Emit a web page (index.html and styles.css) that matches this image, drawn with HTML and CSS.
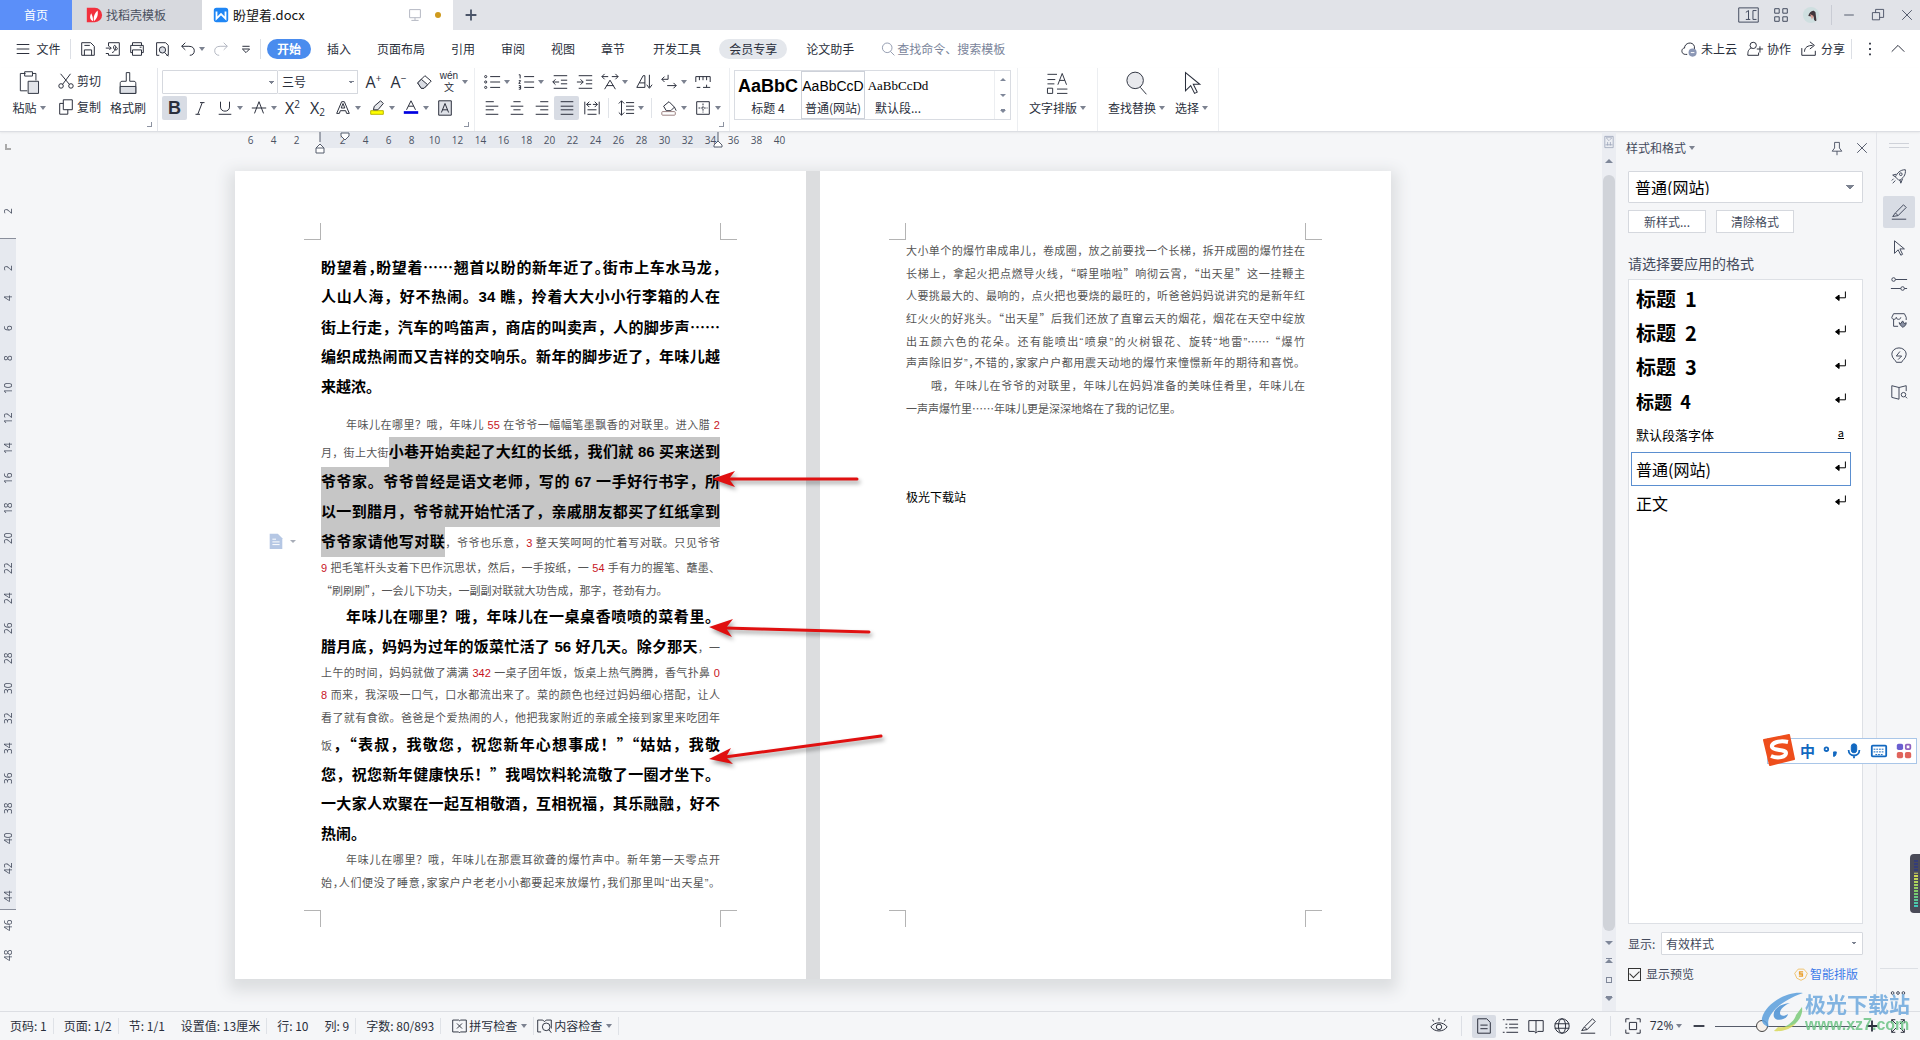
FILE: index.html
```html
<!DOCTYPE html>
<html lang="zh-CN">
<head>
<meta charset="utf-8">
<title>盼望着.docx</title>
<link rel="stylesheet" href="styles.css">
</head>
<body>
<svg class="sprite" aria-hidden="true">
<symbol id="save" viewBox="0 0 20 20"><path d="M3 17V3h10l4 4v10zM6 17v-6h8v6M6 6h6"/></symbol>
<symbol id="export" viewBox="0 0 20 20"><path d="M5 7V3h12v14H5v-2M2 9h6l-2-2M8 9l-2 2M9 14c4-1 5-8 3-8s-2 5 1 5 2-3 0-3M2 15h3"/></symbol>
<symbol id="print" viewBox="0 0 20 20"><path d="M5 6V3h10v3M5 14H3V6h14v8h-2M5 11h10v6H5zM13 8h2"/></symbol>
<symbol id="preview" viewBox="0 0 20 20"><path d="M7 17H4V3h10l3 3v11h-2"/><circle cx="10.500" cy="11" r="3.500" fill="#d9dce3"/><path d="M13 14l4 4"/></symbol>
<symbol id="undo" viewBox="0 0 20 20"><path d="M7 3L3 7l4 4M3 7h8c4 0 6 2 6 5s-2 5-5 5"/></symbol>
<symbol id="redo" viewBox="0 0 20 20"><path d="M13 3l4 4-4 4M17 7H9c-4 0-6 2-6 5s2 5 5 5"/></symbol>
<symbol id="more" viewBox="0 0 20 20"><path d="M6 7h8M6 10l4 4 4-4z"/></symbol>
<symbol id="search" viewBox="0 0 20 20"><circle cx="9" cy="8.500" r="6"/><path d="M13 13l5 5"/></symbol>
<symbol id="cloud" viewBox="0 0 20 20"><path d="M8 16H6c-5 0-5-7-1-7 0-6 9-8 11-2v3"/><circle cx="14" cy="14" r="4.500" fill="#8b97b5" stroke="none"/><path d="M12 14h4" stroke="#fff"/></symbol>
<symbol id="collab" viewBox="0 0 20 20"><circle cx="8" cy="6" r="3.500"/><path d="M6 9c-3 1-4 3-4 8h12v-3M12 10h7M15.500 7v7"/></symbol>
<symbol id="share" viewBox="0 0 20 20"><path d="M2 9v8h15v-5M5 13c0-5 4-7 9-7M11 2l5 4-5 4"/></symbol>
<symbol id="paste" viewBox="0 0 24 30"><path d="M8 4H2v20h8M16 4h4v8M7 2h9v5H7z"/><path d="M11 13h12v14H11z" fill="#e3e5ea"/></symbol>
<symbol id="cut" viewBox="0 0 20 20"><path d="M4 2l10 12M15 2L6 14"/><circle cx="4.500" cy="15.500" r="2.500"/><circle cx="15.500" cy="15.500" r="2.500"/></symbol>
<symbol id="copy" viewBox="0 0 20 20"><path d="M7 2h10v11H7zM7 6H3v12h9v-5"/></symbol>
<symbol id="brush" viewBox="0 0 24 30"><path d="M10 3h4v10h5c2 0 2 2 2 3v11H3V16c0-1 0-3 2-3h5z"/><path d="M3 19h18v8H3z" fill="#dcdfe5"/></symbol>
<symbol id="eraser" viewBox="0 0 20 20"><path d="M3 11l8-8 7 6-8 8H7z"/><path d="M3 11l4-4 7 6-4 4H7z" fill="#d9dce3"/></symbol>
<symbol id="ital" viewBox="0 0 20 20"><path d="M10 4h5M5 17h5M12.500 4l-5 13"/></symbol>
<symbol id="under" viewBox="0 0 20 20"><path d="M5 3v6c0 6 10 6 10 0V3M3 17h14"/></symbol>
<symbol id="strike" viewBox="0 0 20 20"><path d="M5 16l5-13 5 13M2 10h16"/></symbol>
<symbol id="effect" viewBox="0 0 20 20"><path d="M3 16L8.500 3h3L17 16h-3l-1-3H7l-1 3zM8 10h4l-2-5z"/></symbol>
<symbol id="hilite" viewBox="0 0 20 20"><path d="M3 13h14v4H3z" fill="#ff0" stroke="#b9b400"/><path d="M6 12l1-4 7-6 3 3-6 7z" fill="#e4e6ea"/></symbol>
<symbol id="fcolor" viewBox="0 0 20 20"><path d="M5 12l5-10 5 10M7 8h6"/><path d="M2 15h16" stroke="#0000e0" stroke-width="3"/></symbol>
<symbol id="abox" viewBox="0 0 20 20"><path d="M3 2h14v16H3z" fill="#dfe2e8"/><path d="M6 15l4-10 4 10M7 12h6"/></symbol>
<symbol id="bullets" viewBox="0 0 20 20"><path d="M8 4h11M8 10h11M8 16h11"/><circle cx="3" cy="4" r="1.200"/><circle cx="3" cy="10" r="1.200"/><circle cx="3" cy="16" r="1.200"/></symbol>
<symbol id="numbers" viewBox="0 0 20 20"><path d="M8 4h11M8 10h11M8 16h11M2 2h1.500v4M2 8.500h2L2 11.500h2M2 14h2v4H2M2 16h2"/></symbol>
<symbol id="outdent" viewBox="0 0 20 20"><path d="M3 3h15M11 8h7M11 12h7M3 17h15M9 10H2M5 7l-3 3 3 3"/></symbol>
<symbol id="indent" viewBox="0 0 20 20"><path d="M3 3h15M11 8h7M11 12h7M3 17h15M1 10h7M5 7l3 3-3 3"/></symbol>
<symbol id="cspace" viewBox="0 0 20 20"><path d="M4 18l6-10 6 10M6 14h8M1 4h7M12 4h7M4 1L1 4l3 3M16 1l3 3-3 3"/></symbol>
<symbol id="sort" viewBox="0 0 20 20"><path d="M2 16L9 3h2v13zM5 11h6M16 2v14M13 13l3 4 3-4"/></symbol>
<symbol id="wrap" viewBox="0 0 20 20"><path d="M9 2v5H2M5 4L2 7l3 3M8 14h10M15 11l3 3-3 3"/></symbol>
<symbol id="tabs" viewBox="0 0 20 20"><path d="M2 10V4h16v6M6 4v4M10 4v4M14 4v4M3 16h4M10 16h8M14 13v3"/></symbol>
<symbol id="aleft" viewBox="0 0 20 20"><path d="M3 3h9M3 8h14M3 12h9M3 17h14"/></symbol>
<symbol id="acenter" viewBox="0 0 20 20"><path d="M6 3h8M3 8h14M6 12h8M3 17h14"/></symbol>
<symbol id="aright" viewBox="0 0 20 20"><path d="M8 3h9M3 8h14M8 12h9M3 17h14"/></symbol>
<symbol id="ajust" viewBox="0 0 20 20"><path d="M3 3h14M3 8h14M3 12h14M3 17h14"/></symbol>
<symbol id="adist" viewBox="0 0 20 20"><path d="M2 3v14M18 3v14M5 12h10M5 17h10M4 6h5M11 6h5M7 3L4 6l3 3M13 3l3 3-3 3"/></symbol>
<symbol id="lspace" viewBox="0 0 20 20"><path d="M10 4h9M10 8h9M10 12h9M10 16h9M5 2v16M2 5l3-3 3 3M2 15l3 3 3-3"/></symbol>
<symbol id="fill" viewBox="0 0 20 20"><path d="M4 8l6-5 6 6-4 4H7zM16 9l2 4"/><rect x="2" y="14" width="15" height="4" rx="1" stroke="#9a7f7f"/></symbol>
<symbol id="borders" viewBox="0 0 20 20"><path d="M3 3h14v14H3z"/><path d="M10 5v10M5 10h10" stroke-dasharray="2 1"/></symbol>
<symbol id="typeset" viewBox="0 0 26 30"><path d="M2 5h11M2 11h9M2 16h8M14 17l5-13 5 13M16 12h6M2 21h6v6H2zM13 22h12M13 27h12"/></symbol>
<symbol id="find" viewBox="0 0 26 30"><circle cx="12" cy="12" r="9.500" fill="#e8e9ed"/><path d="M18 20l7 8"/></symbol>
<symbol id="cursor" viewBox="0 0 20 20"><path d="M5 2v14l4-4 3 6 2-1-3-6h5z"/></symbol>
<symbol id="screen" viewBox="0 0 24 18"><path d="M1 1h22v16H1zM21 4h-4v10h4M9 6l3-2v10M9 14h5"/></symbol>
<symbol id="grid" viewBox="0 0 20 20"><path d="M3 3h5v5H3zM12 3h5v5h-5zM3 12h5v5H3zM12 12h5v5h-5z"/></symbol>
<symbol id="min" viewBox="0 0 20 20"><path d="M4 10h12"/></symbol>
<symbol id="restore" viewBox="0 0 20 20"><path d="M3 7h9v9H3zM7 7V3h10v10h-5"/></symbol>
<symbol id="close" viewBox="0 0 20 20"><path d="M4 4l12 12M16 4L4 16"/></symbol>
<symbol id="up" viewBox="0 0 20 20"><path d="M3 13l7-7 7 7"/></symbol>
<symbol id="pin" viewBox="0 0 20 20"><path d="M7 3h6v7l3 4H4l3-4zM10 14v5"/></symbol>
<symbol id="rocket" viewBox="0 0 20 20"><path d="M17 3c-6 0-9 4-11 8l4 4c4-2 8-6 7-12zM7 8L3 9l3 2M11 14l1 4 2-5M4 13l-2 2M6 15l-3 3"/><circle cx="12" cy="8" r="1.500"/></symbol>
<symbol id="pen" viewBox="0 0 20 20"><path d="M6 11l9-9 3 3-9 9zM6 11l-3 4 6-1M2 18h16"/></symbol>
<symbol id="sliders" viewBox="0 0 20 20"><circle cx="4" cy="5" r="2"/><circle cx="14" cy="15" r="2"/><path d="M6 5h13M1 15h11M16 15h3"/></symbol>
<symbol id="store" viewBox="0 0 20 20"><path d="M4 9v8h5M2 7l2-4h12l2 4M2 7c0 3 5 3 5 0 0 3 5 3 5 0M18 7v3"/><path d="M10 13c2 4 4 5 4 5s4-1 4-5l-2 1-2-3-2 3z" fill="#8a91a3"/></symbol>
<symbol id="bulb" viewBox="0 0 20 20"><path d="M7 17c0-2-5-4-5-9a8 7 0 0116 0c0 5-5 7-5 9zM11 5l-4 5h6l-4 4"/></symbol>
<symbol id="book" viewBox="0 0 20 20"><path d="M10 5L2 3v13l8 2V5l8-2v6"/><circle cx="15" cy="13" r="2.500"/><path d="M17 15l2 2"/></symbol>
<symbol id="bookopen" viewBox="0 0 20 20"><path d="M10 4H2v12h6l2 2 2-2h6V4zM10 4v13"/></symbol>
<symbol id="ret" viewBox="0 0 20 20"><path d="M16 5v7H6"/><path d="M9 9l-4 3 4 3z" fill="currentColor"/></symbol>
<symbol id="spell" viewBox="0 0 20 20"><path d="M9 3H2v14h7l1 1 1-1h7V3h-7l-1 1zM7 7l6 6M13 7l-6 6"/></symbol>
<symbol id="check" viewBox="0 0 20 20"><path d="M6 17H2V3h6l2 2 2-2h6v10"/><circle cx="12" cy="11" r="4.500"/><path d="M15 14l3 4"/></symbol>
<symbol id="eye" viewBox="0 0 20 20"><path d="M1 11c4-6 14-6 18 0-4 6-14 6-18 0zM10 4V1M4 5L3 3M16 5l1-2"/><circle cx="10" cy="11" r="3"/></symbol>
<symbol id="pageview" viewBox="0 0 20 20"><path d="M3 2h10l4 4v12H3zM6 9h8M6 13h8"/></symbol>
<symbol id="outline" viewBox="0 0 20 20"><path d="M6 3h13M9 8h10M9 12h10M6 17h13M2 3h2M5 8h2M5 12h2M2 17h2"/></symbol>
<symbol id="globe" viewBox="0 0 20 20"><circle cx="10" cy="10" r="8"/><ellipse cx="10" cy="10" rx="4" ry="8"/><path d="M2 7.500h16M2 12.500h16"/></symbol>
<symbol id="fit" viewBox="0 0 20 20"><path d="M2 6V2h4M14 2h4v4M18 14v4h-4M6 18H2v-4M6 6h8v8H6z"/></symbol>
<symbol id="full" viewBox="0 0 20 20"><path d="M3 7V3h4M3 3l5 5M13 3h4v4M17 3l-5 5M17 13v4h-4M17 17l-5-5M7 17H3v-4M3 17l5-5"/></symbol>
</svg>

<header class="titlebar">
  <button class="tab home">首页</button>
  <button class="tab docer"><svg class="ic fire" viewBox="0 0 20 20"><path d="M2 2h9a8 8 0 010 16H2z" fill="#f2303d" stroke="none"/><path d="M9 17c-4-2-4-6-2-9 1 3 2 4 2 9zM10 17c-1-6 1-9 4-12 1 6-1 9-4 12z" fill="#fff" stroke="none"/></svg>找稻壳模板</button>
  <button class="tab doc"><svg class="ic" viewBox="0 0 20 20"><rect x="2" y="2" width="16" height="16" rx="3" fill="#1f86f5" stroke="none"/><path d="M5 6v8l5-5 5 5V6" stroke="#fff" stroke-width="2"/></svg><span class="grow">盼望着.docx</span><svg class="ic pale" viewBox="0 0 20 20"><path d="M4 4h12v9H4zM10 13v3M6 16h8"/></svg><i class="dot"></i></button>
  <button class="plus" aria-label="新建"><svg class="ic" viewBox="0 0 20 20"><path d="M4 10h12M10 4v12" stroke-width="2"/></svg></button>
  <div class="winctl">
    <svg class="ic wide"><use href="#screen"/></svg><svg class="ic"><use href="#grid"/></svg>
    <svg class="ic" viewBox="0 0 20 20"><circle cx="10" cy="10" r="9" fill="#cfdfe0" stroke="none"/><path d="M7 11c1-5 6-8 8-4l1 9c-2 2-3-1-3-4z" fill="#41363c" stroke="none"/><path d="M9 9l4 2-2 4z" fill="#d99d92" stroke="none"/></svg>
    <i class="vsep"></i>
    <button aria-label="最小化"><svg class="ic"><use href="#min"/></svg></button><button aria-label="还原"><svg class="ic"><use href="#restore"/></svg></button><button aria-label="关闭"><svg class="ic"><use href="#close"/></svg></button>
  </div>
</header>

<nav class="menubar">
  <button class="file"><svg class="ic" viewBox="0 0 20 20"><path d="M3 5h14M3 10h14M3 15h14"/></svg>文件</button>
  <i class="vsep"></i>
  <div class="quick">
    <button aria-label="保存"><svg class="ic"><use href="#save"/></svg></button><button aria-label="输出"><svg class="ic"><use href="#export"/></svg></button><button aria-label="打印"><svg class="ic"><use href="#print"/></svg></button><button aria-label="预览"><svg class="ic"><use href="#preview"/></svg></button><button class="dd" aria-label="撤销"><svg class="ic"><use href="#undo"/></svg></button><button class="pale" aria-label="恢复"><svg class="ic"><use href="#redo"/></svg></button><button aria-label="更多"><svg class="ic"><use href="#more"/></svg></button>
  </div>
  <i class="vsep"></i>
  <div class="menus">
    <button class="pill on">开始</button><button>插入</button><button>页面布局</button><button>引用</button><button>审阅</button><button>视图</button><button>章节</button><button class="dev">开发工具</button><button class="pill vip">会员专享</button><button>论文助手</button>
  </div>
  <label class="search"><svg class="ic"><use href="#search"/></svg><input type="text" placeholder="查找命令、搜索模板" aria-label="查找命令"></label>
  <div class="account">
    <button><svg class="ic"><use href="#cloud"/></svg>未上云</button><button><svg class="ic"><use href="#collab"/></svg>协作</button><button><svg class="ic"><use href="#share"/></svg>分享</button>
    <i class="vsep"></i>
    <button aria-label="菜单"><svg class="ic" viewBox="0 0 20 20"><path d="M10 3v2M10 9v2M10 15v2" stroke-width="2"/></svg></button><button aria-label="收起"><svg class="ic"><use href="#up"/></svg></button>
  </div>
</nav>

<section class="ribbon">
  <div class="group clip">
    <button class="big"><svg class="ic lg"><use href="#paste"/></svg><span class="dd">粘贴</span></button>
    <div class="stack"><button><svg class="ic"><use href="#cut"/></svg>剪切</button><button><svg class="ic"><use href="#copy"/></svg>复制</button></div>
    <button class="big"><svg class="ic lg"><use href="#brush"/></svg><span>格式刷</span></button>
    <i class="launch"></i>
  </div>
  <div class="group font">
    <div class="row">
      <select class="combo name" aria-label="字体"><option></option></select><select class="combo size" aria-label="字号"><option>三号</option></select>
      <button class="t" aria-label="增大字号"><span class="glyph">A<sup>+</sup></span></button><button class="t" aria-label="减小字号"><span class="glyph">A<sup>−</sup></span></button><button class="t" aria-label="清除"><svg class="ic"><use href="#eraser"/></svg></button><button class="t dd wen"><span><span>wén</span><span>文</span></span></button>
    </div>
    <div class="row">
      <button class="t on bold">B</button><button class="t" aria-label="倾斜"><svg class="ic"><use href="#ital"/></svg></button><button class="t dd" aria-label="下划线"><svg class="ic"><use href="#under"/></svg></button><button class="t dd" aria-label="删除线"><svg class="ic"><use href="#strike"/></svg></button><button class="t"><span class="glyph">X<sup>2</sup></span></button><button class="t"><span class="glyph">X<sub>2</sub></span></button><button class="t dd" aria-label="效果"><svg class="ic"><use href="#effect"/></svg></button><button class="t dd" aria-label="突出显示"><svg class="ic"><use href="#hilite"/></svg></button><button class="t dd" aria-label="字体颜色"><svg class="ic"><use href="#fcolor"/></svg></button><button class="t" aria-label="底纹"><svg class="ic"><use href="#abox"/></svg></button>
    </div>
    <i class="launch"></i>
  </div>
  <div class="group para">
    <div class="row">
      <button class="t dd" aria-label="项目符号"><svg class="ic"><use href="#bullets"/></svg></button><button class="t dd" aria-label="编号"><svg class="ic"><use href="#numbers"/></svg></button><button class="t" aria-label="减少缩进"><svg class="ic"><use href="#outdent"/></svg></button><button class="t" aria-label="增加缩进"><svg class="ic"><use href="#indent"/></svg></button><button class="t dd" aria-label="中文版式"><svg class="ic"><use href="#cspace"/></svg></button><button class="t" aria-label="排序"><svg class="ic"><use href="#sort"/></svg></button><button class="t dd" aria-label="换行"><svg class="ic"><use href="#wrap"/></svg></button><button class="t" aria-label="制表位"><svg class="ic"><use href="#tabs"/></svg></button>
    </div>
    <div class="row">
      <button class="t" aria-label="左对齐"><svg class="ic"><use href="#aleft"/></svg></button><button class="t" aria-label="居中"><svg class="ic"><use href="#acenter"/></svg></button><button class="t" aria-label="右对齐"><svg class="ic"><use href="#aright"/></svg></button><button class="t on" aria-label="两端对齐"><svg class="ic"><use href="#ajust"/></svg></button><button class="t" aria-label="分散对齐"><svg class="ic"><use href="#adist"/></svg></button><i class="vsep"></i><button class="t dd" aria-label="行距"><svg class="ic"><use href="#lspace"/></svg></button><i class="vsep"></i><button class="t dd" aria-label="填充"><svg class="ic"><use href="#fill"/></svg></button><button class="t dd" aria-label="边框"><svg class="ic"><use href="#borders"/></svg></button>
    </div>
    <i class="launch"></i>
  </div>
  <div class="group styles">
    <div class="gallery">
      <button class="g1"><b>AaBbC</b><span>标题 4</span></button><button class="g2"><b>AaBbCcD</b><span>普通(网站)</span></button><button class="g3"><b>AaBbCcDd</b><span>默认段...</span></button>
      <div class="gscroll"><button class="tri upw" aria-label="上"></button><button class="tri" aria-label="下"></button><button class="tri bar" aria-label="展开"></button></div>
    </div>
  </div>
  <div class="group g79"><button class="big"><svg class="ic lg"><use href="#typeset"/></svg><span class="dd">文字排版</span></button></div>
  <div class="group g121"><button class="big"><svg class="ic lg"><use href="#find"/></svg><span class="dd">查找替换</span></button><button class="big"><svg class="ic lg thin"><use href="#cursor"/></svg><span class="dd">选择</span></button></div>
</section>

<main class="work">
  <div class="vruler"><i class="tabmark"></i><span>2</span><span class="zero"></span><div class="vactive"><span>2</span><span>4</span><span>6</span><span>8</span><span>10</span><span>12</span><span>14</span><span>16</span><span>18</span><span>20</span><span>22</span><span>24</span><span>26</span><span>28</span><span>30</span><span>32</span><span>34</span><span>36</span><span>38</span><span>40</span><span>42</span><span>44</span></div><span>46</span><span>48</span></div>
  <div class="canvas">
    <div class="hruler">
      <svg class="marks" viewBox="0 0 500 24"><path d="M85 0v10M483 0v10"/><path d="M81 21v-5l4-4 4 4v5zM81 16h8M106 1h8v3l-4 4-4-4zM479 15v-2l4-4 4 4v2z" fill="#fff"/></svg>
      <span>6</span><span>4</span><span>2</span><span></span><span>2</span><span>4</span><span>6</span><span>8</span><span>10</span><span>12</span><span>14</span><span>16</span><span>18</span><span>20</span><span>22</span><span>24</span><span>26</span><span>28</span><span>30</span><span>32</span><span>34</span><span>36</span><span>38</span><span>40</span>
    </div>
    <div class="pages">
      <article class="paper">
        <div class="text">
          <i class="c tl"></i><i class="c tr"></i><i class="c bl"></i><i class="c br"></i>
          <div class="body first">
<p class="h">盼望着<span class="halt">，</span>盼望着<span class="cj">……</span>翘首以盼的新年近了<span class="halt">。</span>街市上车水马龙<span class="halt">，</span></p>
<p class="h">人山人海，好不热闹。34 瞧，拎着大大小小行李箱的人在</p>
<p class="h">街上行走，汽车的鸣笛声，商店的叫卖声，人的脚步声<span class="cj">……</span></p>
<p class="h">编织成热闹而又吉祥的交响乐。新年的脚步近了，年味儿越</p>
<p class="h end last">来越浓。</p>
<p class="in">年味儿在哪里？哦，年味儿 <em>55</em> 在爷爷一幅幅笔墨飘香的对联里。进入腊 <em>2</em></p>
<p class="h"><small>月，街上大街</small><mark>小巷开始卖起了大红的长纸，我们就 86 买来送到</mark></p>
<p class="h sel">爷爷家。爷爷曾经是语文老师，写的 67 一手好行书字，所</p>
<p class="h sel">以一到腊月，爷爷就开始忙活了，亲戚朋友都买了红纸拿到</p>
<p class="h"><mark>爷爷家请他写对联</mark><small>，爷爷也乐意，<em>3</em> 整天笑呵呵的忙着写对联。只见爷爷</small></p>
<p><em>9</em> 把毛笔杆头支着下巴作沉思状，然后，一手按纸，一 <em>54</em> 手有力的握笔、蘸墨、</p>
<p class="end"><span class="cj">“刷刷刷”</span>，一会儿下功夫，一副副对联就大功告成，那字，苍劲有力。</p>
<p class="h in">年味儿在哪里？哦，年味儿在一桌桌香喷喷的菜肴里。</p>
<p class="h">腊月底，妈妈为过年的饭菜忙活了 56 好几天。除夕那天<small>，一</small></p>
<p>上午的时间，妈妈就做了满满 <em>342</em> 一桌子团年饭，饭桌上热气腾腾，香气扑鼻 <em>0</em></p>
<p><em>8</em> 而来，我深吸一口气，口水都流出来了。菜的颜色也经过妈妈细心搭配，让人</p>
<p>看了就有食欲。爸爸是个爱热闹的人，他把我家附近的亲戚全接到家里来吃团年</p>
<p class="h"><small>饭</small><span class="cj">，“表叔，我敬您，祝您新年心想事成！”“姑姑，我敬</span></p>
<p class="h">您，祝您新年健康快乐！<span class="cj">”</span>我喝饮料轮流敬了一圈才坐下。</p>
<p class="h">一大家人欢聚在一起互相敬酒，互相祝福，其乐融融，好不</p>
<p class="h end">热闹。</p>
<p class="in">年味儿在哪里？哦，年味儿在那震耳欲聋的爆竹声中。新年第一天零点开</p>
<p>始<span class="halt">，</span>人们便没了睡意<span class="halt">，</span>家家户户老老小小都要起来放爆竹<span class="halt">，</span>我们那里叫“出天星”。</p>
          </div>
        </div>
        <div class="pasteopt"><svg class="ic" viewBox="0 0 20 20"><path d="M3 2h9l5 5v12H3z" fill="#b5c7e4" stroke="none"/><path d="M6 8h4M6 11h8M6 14h8" stroke="#fff"/></svg><i class="tri"></i></div>
      </article>
      <article class="paper">
        <div class="text">
          <i class="c tl"></i><i class="c tr"></i><i class="c bl"></i><i class="c br"></i>
          <div class="body">
<p>大小单个的爆竹串成串儿，卷成圈，放之前要找一个长梯，拆开成圈的爆竹挂在</p>
<p class="cj">长梯上，拿起火把点燃导火线，“噼里啪啦”响彻云霄，“出天星”这一挂鞭主</p>
<p>人要挑最大的、最响的，点火把也要烧的最旺的，听爸爸妈妈说讲究的是新年红</p>
<p class="cj">红火火的好兆头。“出天星”后我们还放了直窜云天的烟花，烟花在天空中绽放</p>
<p>出五颜六色的花朵。还有能喷出“喷泉”的火树银花、旋转“地雷”<span class="cj">……“</span>爆竹</p>
<p>声声除旧岁”<span class="halt">，</span>不错的<span class="halt">，</span>家家户户都用震天动地的爆竹来憧憬新年的期待和喜悦。</p>
<p class="in">哦，年味儿在爷爷的对联里，年味儿在妈妈准备的美味佳肴里，年味儿在</p>
<p class="end">一声声爆竹里<span class="cj">……</span>年味儿更是深深地烙在了我的记忆里。</p>
<p></p><p></p><p></p>
<p class="end sign">极光下载站</p>
          </div>
        </div>
      </article>
      <svg class="arrows" viewBox="0 0 1156 808"><g><path d="M622 308H494" class="ln"/><path d="M477 308l23-8-6 8 6 8z"/><path d="M634 461L490 457" class="ln"/><path d="M474 456l24-8-7 9 6 9z"/><path d="M646 565L490 586" class="ln"/><path d="M474 588l22-11-5 9 7 7z"/></g></svg>
    </div>
  </div>
  <div class="vscroll"><svg class="ic sm" viewBox="0 0 20 20"><path d="M4 2h12v16H4zM5 14h10M8 10v5M12 10v5" /><path d="M6 4l4 4 4-4z" fill="#fff"/></svg><i class="tri upw"></i><div class="thumb"></div><i class="tri"></i><i class="tri upw bar"></i><i class="sq"></i><i class="tri bar"></i></div>
  <aside class="pane">
    <div class="ptitle"><span class="dd">样式和格式</span><button aria-label="固定"><svg class="ic"><use href="#pin"/></svg></button><button aria-label="关闭窗格"><svg class="ic"><use href="#close"/></svg></button></div>
    <select class="cur" aria-label="当前样式"><option>普通(网站)</option></select>
    <div class="pbtns"><button>新样式...</button><button>清除格式</button></div>
    <h2>请选择要应用的格式</h2>
    <ul class="list">
      <li class="h1">标题 &nbsp;1<svg class="ic"><use href="#ret"/></svg></li><li class="h2">标题 &nbsp;2<svg class="ic"><use href="#ret"/></svg></li><li class="h2">标题 &nbsp;3<svg class="ic"><use href="#ret"/></svg></li><li class="h4">标题 &nbsp;4<svg class="ic"><use href="#ret"/></svg></li><li class="def">默认段落字体<u>a</u></li><li class="cursel">普通(网站)<svg class="ic"><use href="#ret"/></svg></li><li>正文<svg class="ic"><use href="#ret"/></svg></li>
    </ul>
    <div class="show"><label for="show">显示:</label><select id="show"><option>有效样式</option></select></div>
    <div class="prev"><label><input type="checkbox" checked>显示预览</label><a href="#"><svg class="ic sm" viewBox="0 0 20 20"><path d="M6 3h8l5 6-3 7-6 3-6-3-3-7z" stroke="#f0b64c"/><path d="M13 7H8v3h4v3H7" stroke="#eaa02c" stroke-width="2"/></svg>智能排版</a></div>
  </aside>
  <div class="side">
    <i class="grip"></i>
    <button aria-label="快捷"><svg class="ic"><use href="#rocket"/></svg></button><button class="on" aria-label="样式"><svg class="ic"><use href="#pen"/></svg></button><button aria-label="选择"><svg class="ic"><use href="#cursor"/></svg></button><button aria-label="属性"><svg class="ic"><use href="#sliders"/></svg></button><button aria-label="素材"><svg class="ic"><use href="#store"/></svg></button><button aria-label="推荐"><svg class="ic"><use href="#bulb"/></svg></button><button aria-label="词典"><svg class="ic"><use href="#book"/></svg></button>
    <div class="sdots"><svg class="ic" viewBox="0 0 20 20"><circle cx="4" cy="10" r="1.500"/><circle cx="10" cy="10" r="1.500"/><circle cx="16" cy="10" r="1.500"/></svg></div>
  </div>
</main>

<footer class="status">
  <span class="b">页码: 1</span><span class="b">页面: 1/2</span><span>节: 1/1</span><span class="b">设置值: 13厘米</span><span>行: 10</span><span class="b">列: 9</span><span class="b">字数: 80/893</span>
  <button class="b dd"><svg class="ic"><use href="#spell"/></svg>拼写检查</button><button class="b dd"><svg class="ic"><use href="#check"/></svg>内容检查</button>
  <div class="views">
    <button aria-label="护眼"><svg class="ic"><use href="#eye"/></svg></button><i class="vsep"></i>
    <button class="on" aria-label="页面"><svg class="ic"><use href="#pageview"/></svg></button><button aria-label="大纲"><svg class="ic"><use href="#outline"/></svg></button><button aria-label="阅读"><svg class="ic"><use href="#bookopen"/></svg></button><button aria-label="Web"><svg class="ic"><use href="#globe"/></svg></button><button aria-label="写作"><svg class="ic"><use href="#pen"/></svg></button><i class="vsep"></i>
    <button aria-label="适合"><svg class="ic"><use href="#fit"/></svg></button><button class="pct dd">72%</button><button aria-label="缩小"><svg class="ic bolder"><use href="#min"/></svg></button><input type="range" min="0" max="100" value="32" aria-label="缩放"><button aria-label="放大"><svg class="ic bolder" viewBox="0 0 20 20"><path d="M4 10h12M10 4v12"/></svg></button><button aria-label="全屏"><svg class="ic"><use href="#full"/></svg></button>
  </div>
</footer>

<div class="ime">
  <svg class="sogou" viewBox="0 0 32 32"><path d="M1 6L26 1l5 24-24 6z" fill="#ee4e1c" stroke="#ee4e1c" stroke-width="2" stroke-linejoin="round"/><path d="M25 8C16 6 8 9 9 13s14 2 14 6-8 6-15 3" fill="none" stroke="#fff" stroke-width="4"/></svg>
  <b>中</b>
  <svg class="ic" viewBox="0 0 20 20"><circle cx="6" cy="8" r="2" stroke-width="2"/><path d="M14 11h3c0 3-1 5-3 5z" fill="currentColor"/></svg>
  <svg class="ic" viewBox="0 0 20 20"><rect x="7" y="2" width="6" height="10" rx="3" fill="currentColor"/><path d="M4 9c0 8 12 8 12 0M10 15v3" stroke-width="2"/></svg>
  <svg class="ic" viewBox="0 0 20 20"><rect x="2" y="4" width="16" height="12" rx="1" stroke-width="2"/><path d="M4 8h12M4 11h12M6 14h8" stroke-dasharray="2 1"/></svg>
  <svg class="ic" viewBox="0 0 20 20"><g stroke="none"><rect x="2" y="2" width="7" height="7" rx="2" fill="#6a5fd0"/><rect x="2" y="11" width="7" height="7" rx="2" fill="#e0645c"/><rect x="11" y="11" width="7" height="7" rx="2" fill="#e0645c"/></g><rect x="12" y="3" width="5" height="5" rx="1" stroke="#8f62c0" stroke-width="2"/></svg>
</div>
<div class="meter"></div>
<div class="wm">
  <svg viewBox="0 0 44 42"><path d="M42 2C24 0 4 14 1 27c-1 5 3 8 7 9-4-9 6-24 34-34z" fill="#5b9fdc"/><path d="M29 12c-12 1-18 8-16 14 2 5 13 3 14-3-4 3-8 2-8-1 0-4 5-8 10-10z" fill="#4a90d4"/><path d="M41 16c2 12-10 24-28 24 10-3 20-8 22-16z" fill="#7ccb7a"/><path d="M13 40c9 1 17-2 22-8-7 4-14 5-18 4z" fill="#d9d95a"/></svg>
  <div><strong>极光下载站</strong><b>www.xz7.com</b></div>
</div>
</body>
</html>
```
FILE: styles.css
```css
* { box-sizing: border-box; }
body { margin: 0; min-height: 100vh; display: flex; flex-direction: column; background: #f5f6f8; color: #2a2f3c; font: 12px/16px "Noto Sans CJK SC", sans-serif; overflow: hidden; position: relative; }
button, select, input { font: inherit; color: inherit; }
button { border: 0; padding: 0; background: none; display: flex; align-items: center; justify-content: center; white-space: nowrap; }
.sprite { display: none; }
.ic { width: 20px; height: 18px; fill: none; stroke: currentColor; stroke-width: 1.1; flex: none; }
.ic.sm { width: 14px; height: 14px; }
.ic.wide { width: 25px; height: 16px; }
.ic.lg { width: 26px; height: 26px; }
.ic.thin { stroke-width: 0.8; }
.ic.bolder { stroke-width: 2; }
.pale { color: #b4b8c2; }
.vsep { width: 1px; height: 20px; background: #dcdfe5; flex: none; }
.dd::after { content: ""; border: 3px solid transparent; border-top: 4px solid #7c8290; border-bottom: 0; margin-left: 3px; flex: none; }
.tri { width: 0; height: 0; border: 4px solid transparent; border-top: 4px solid #7f8799; border-bottom: 0; }
.tri.upw { border: 4px solid transparent; border-bottom: 4px solid #7f8799; border-top: 0; }

.titlebar { height: 30px; display: flex; background: #e1e3e8; }
.tab { padding: 0 12px; gap: 2px; }
.home { width: 72px; background: #5b8ff9; color: #fff; }
.docer { width: 130px; background: #d7d9de; justify-content: flex-start; color: #4a5060; }
.doc { width: 251px; background: #fff; color: #111; padding-left: 9px; }
.grow { flex: 1; text-align: left; font-size: 13px; }
.dot { width: 6px; height: 6px; border-radius: 3px; background: #cf9a1d; margin-left: 8px; }
.plus { width: 36px; color: #4a5468; }
.winctl { margin-left: auto; display: flex; align-items: center; gap: 10px; padding-right: 4px; color: #434b5e; }
.winctl .vsep { margin: 0 -3px 0 0; background: #c9ccd4; }
.winctl button { width: 19px; }
.winctl button .ic { width: 16px; }

.menubar { height: 38px; background: #fff; display: flex; align-items: center; }
.file { width: 70px; gap: 3px; padding-left: 4px; }
.quick { display: flex; width: 189px; padding: 0 2px 0 5px; }
.quick button { width: 25px; }
.quick button.dd { width: 36px; }
.quick .dd::after { margin-left: 1px; }
.menus { display: flex; padding-left: 6px; }
.menus button { padding: 0 13px; height: 20px; }
.menus .pill { border-radius: 10px; padding: 0 10px; }
.menus .on { background: #4a8cee; color: #fff; font-weight: 700; margin-right: 3px; }
.menus .dev { padding: 0 12px 0 15px; }
.menus .vip { background: #e4e7ec; margin: 0 6px; }
.search { display: flex; align-items: center; margin-left: 12px; color: #8a93a8; }
.search .ic { width: 18px; height: 16px; }
.search input { border: 0; width: 130px; padding: 0; background: none; }
.search input::placeholder { color: #7a849a; }
.account { margin-left: auto; display: flex; align-items: center; padding-right: 12px; }
.account button { gap: 2px; margin-left: 8px; }
.account .vsep { margin-left: 6px; }

.ribbon { height: 64px; background: #fff; display: flex; border-bottom: 1px solid #dcdee3; box-shadow: 0 1px 2px rgba(0,0,0,.06); }
.group { border-right: 1px solid #eceef1; display: flex; padding: 0 4px; position: relative; }
.launch { position: absolute; right: 5px; bottom: 4px; width: 5px; height: 5px; border: solid #8d93a1; border-width: 0 1px 1px 0; }
.big { flex-direction: column; gap: 2px; justify-content: flex-start; padding-top: 2px; }
.big span { display: flex; align-items: center; height: 20px; }
.clip { width: 158px; padding: 0 8px; justify-content: space-between; border-color: #e3e5ea; }
.clip .big { width: 42px; }
.stack { display: flex; flex-direction: column; gap: 6px; padding-top: 3px; }
.stack button { height: 20px; gap: 1px; }
.font { width: 317px; flex-direction: column; gap: 2px; padding-top: 2px; }
.para { width: 255px; flex-direction: column; gap: 2px; padding-top: 2px; }
.row { display: flex; align-items: center; height: 24px; }
select { appearance: none; background: conic-gradient(from -45deg at 50% 100%, #7c8290 90deg, transparent 0) no-repeat right 8px center / 8px 4px #fff; border: 1px solid #d5d8de; border-radius: 1px; }
.combo { height: 24px; padding: 0 4px; background-position: right 3px center; background-size: 6px 3px; }
.name { width: 116px; }
.size { width: 80px; border-left: 0; margin-right: 3px; }
.t { width: 25px; height: 24px; flex: none; }
.t.dd { width: 34px; }
.t.dd::after { margin-left: 2px; }
.t.on, .views .on, .side .on { background: #d8dce4; border-radius: 2px; }
.bold { font: 700 18px/20px "Liberation Sans", sans-serif; }
.glyph { font: 16px/20px "Open Sans", sans-serif; display: flex; }
.glyph sup, .glyph sub { font-size: 10px; line-height: 12px; }
.glyph sub { align-self: flex-end; }
.wen > span { width: 22px; height: 24px; display: grid; grid-template-rows: 12px 12px; font: 10px/12px "Liberation Sans", "Noto Sans CJK SC", sans-serif; }
.row .vsep { margin: 0 4px; background: #e0e3e8; }
.styles { width: 288px; padding-top: 2px; }
.gallery { flex: 1; display: flex; height: 50px; border: 1px solid #d9dce2; margin-right: 2px; }
.gallery > button { flex-direction: column; width: 66px; color: #2a2f3c; }
.gallery > button b { height: 26px; line-height: 28px; color: #000; font-weight: 400; font-family: "Liberation Sans", sans-serif; font-size: 14px; }
.gallery .g1 b { font-weight: 700; font-size: 18px; }
.gallery .g2 { width: 64px; border: 1px solid #cdd1d9; }
.gallery .g3 b { font-family: "Liberation Serif", serif; font-size: 13px; }
.gallery span { line-height: 20px; }
.gscroll { margin-left: auto; width: 16px; display: flex; flex-direction: column; align-items: center; justify-content: space-around; border-left: 1px solid #eceef1; }
.gscroll .tri { border-width: 3px; }
.tri.bar { box-shadow: 0 -2px 0 -1px #7f8799; }
.g79 { width: 80px; justify-content: center; }
.g121 { width: 121px; gap: 10px; justify-content: center; }

.work { flex: 1; display: flex; min-height: 0; }
.vruler { width: 16px; display: flex; flex-direction: column; align-items: center; font: 10px/16px "Open Sans", sans-serif; color: #4b5263; padding-top: 12px; }
.vruler span { height: 30px; width: 16px; flex: none; writing-mode: vertical-rl; transform: rotate(180deg); text-align: center; }
.tabmark { width: 6px; height: 6px; border-left: 2px solid #aaa; border-bottom: 2px solid #aaa; margin: 0 0 46px; flex: none; }
.vruler .zero { height: 12px; }
.vactive { background: #e6e9ef; border: solid #8a8f9c; border-width: 1px 0; padding-top: 14px; display: flex; flex-direction: column; flex: none; }
.vactive span:last-child { height: 26px; }
.canvas { flex: 1; display: flex; flex-direction: column; align-items: center; padding-left: 8px; }
.hruler { width: 1156px; height: 16px; padding-left: 4px; display: flex; position: relative; font: 10px/16px "Open Sans", sans-serif; color: #4b5263; background: linear-gradient(#e6e9ef, #e6e9ef) no-repeat 85px 0 / 398px 16px; }
.hruler span { width: 23px; text-align: center; }
.marks { position: absolute; left: 0; top: 0; width: 500px; height: 24px; fill: none; stroke: #555c6c; }
.pages { display: flex; gap: 14px; margin-top: 23px; position: relative; background: #dcdddf; box-shadow: 0 6px 14px 6px #dcdee0; }
.paper { width: 571px; min-height: 808px; background: #fff; padding: 69px 86px; position: relative; display: flex; }
.text { flex: 1; position: relative; min-width: 0; }
.c { position: absolute; width: 17px; height: 17px; border: 0 solid #b4b4b4; }
.tl { right: 100%; bottom: 100%; border-width: 0 1px 1px 0; }
.tr { left: 100%; bottom: 100%; border-width: 0 0 1px 1px; }
.bl { right: 100%; top: 100%; border-width: 1px 1px 0 0; }
.br { left: 100%; top: 100%; border-width: 1px 0 0 1px; }
.body { font-family: "Liberation Sans", "Noto Sans CJK SC", sans-serif; color: #000; }
.first { padding-top: 12px; }
.body p { margin: 0; height: 22px; font-size: 11px; line-height: 22px; color: #555; white-space: nowrap; text-align: justify; text-align-last: justify; }
.body p:nth-child(even) { height: 23px; }
.body p.h { height: 30px; font-size: 15px; line-height: 30px; font-weight: 700; color: #000; }
.body p.end { text-align-last: left; }
.body p.in { padding-left: 25px; }
.body p.last { margin-bottom: 12px; }
.body p.sign { color: #000; font-size: 12px; }
.body em { color: #c8141e; font-style: normal; }
.body small { font-size: 11px; font-weight: 400; color: #555; }
.body mark { background: #c6c6c6; color: #000; padding: 6px 0 7px; }
.body .sel { background: #c6c6c6; }
.cj { font-family: "Noto Sans CJK SC", sans-serif; }
.halt { font-feature-settings: "halt"; }
.pasteopt { position: absolute; left: 31px; top: 361px; display: flex; align-items: center; gap: 4px; }
.pasteopt .tri { border-width: 3px; border-top-color: #a8adb8; }
.arrows { position: absolute; left: 0; top: 0; width: 1156px; height: 808px; fill: #e01010; filter: drop-shadow(2px 3px 2px rgba(0,0,0,.4)); }
.arrows .ln { stroke: #e01010; stroke-width: 3; stroke-linecap: round; }

.vscroll { width: 14px; background: #ebedf2; display: flex; flex-direction: column; align-items: center; padding: 3px 0 10px; color: #9aa3b8; gap: 14px; }
.vscroll .upw { margin: -4px 0 -2px; }
.thumb { flex: 1; width: 12px; border-radius: 6px; background: #d0d3d9; margin-bottom: -4px; }
.vscroll .upw.bar { margin: 0; }
.sq { width: 6px; height: 6px; border: 1px solid #7f8799; }
.pane { width: 261px; padding: 0 13px 0 12px; display: flex; flex-direction: column; border-right: 1px solid #e3e5ea; color: #434a5c; }
.ptitle { height: 31px; display: flex; align-items: center; gap: 5px; margin: 0 -9px 0 -2px; }
.ptitle .dd { flex: 1; display: flex; align-items: center; }
.ptitle button { width: 20px; }
.ptitle .ic { width: 18px; height: 16px; }
.cur { height: 32px; margin-top: 8px; padding: 0 6px; font-size: 16px; color: #000; }
.pbtns { display: flex; gap: 10px; margin-top: 7px; }
.pbtns button { width: 78px; height: 23px; background: #fff; border: 1px solid #d5d8de; }
.pane h2 { margin: 21px 0 7px; font-size: 14px; line-height: 18px; font-weight: 400; }
.list { list-style: none; margin: 0; padding: 2px; flex: 1; background: #fff; border: 1px solid #dde0e5; color: #000; font-size: 16px; }
.list li { height: 34px; margin-right: 9px; padding: 0 0 0 4px; display: flex; align-items: center; justify-content: space-between; white-space: pre; border: 1px solid transparent; }
.list .ic { margin-bottom: 6px; }
.list .h1, .list .h2 { font-size: 20px; font-weight: 700; }
.list .h4 { font-size: 18px; font-weight: 700; }
.list .def { font-size: 13px; }
.list .def u { font-size: 11px; margin: 0 6px 6px 0; }
.list .cursel { border-color: #5b8fd0; }
.show { display: flex; align-items: center; justify-content: space-between; margin-top: 8px; }
.show select { width: 202px; height: 23px; padding: 0 4px; background-position: right 5px center; background-size: 6px 3px; }
.prev { height: 56px; padding-top: 10px; display: flex; justify-content: space-between; }
.prev label, .prev a { display: flex; align-items: center; height: 18px; gap: 5px; }
.prev a { color: #3c7ae8; text-decoration: none; gap: 2px; padding-right: 5px; }
.prev input { appearance: none; width: 13px; height: 13px; margin: 0; border: 1px solid #333; display: grid; place-items: center; }
.prev input:checked::before { content: ""; width: 8px; height: 5px; border: solid #333; border-width: 0 0 1px 1px; transform: rotate(-45deg); margin-bottom: 3px; }
.side { width: 43px; display: flex; flex-direction: column; align-items: center; gap: 4px; color: #434a5c; }
.grip { width: 20px; height: 5px; border: solid #cfd2d9; border-width: 1px 0; margin: 11px 0 8px; }
.side button { width: 32px; height: 32px; }
.sdots { margin-top: auto; height: 43px; width: 38px; border-top: 1px solid #dde0e5; padding: 15px 0 0 8px; }

.status { height: 29px; border-top: 1px solid #dcdee3; display: flex; align-items: center; padding-left: 10px; }
.status > * { margin-right: 10px; white-space: nowrap; }
.status > span:not(.b) { margin-right: 16px; }
.status .b { border-right: 1px solid #dfe2e7; padding-right: 6px; }
.status > button { margin-right: 2px; gap: 1px; }
.status > button .ic { width: 17px; }
.views { margin-left: auto; display: flex; align-items: center; gap: 2px; }
.views button { width: 24px; height: 23px; }
.views .vsep { margin: 0 8px; }
.views .pct { width: 38px; font: 12px/16px "Open Sans", sans-serif; }
.views input { appearance: none; width: 141px; height: 16px; margin: 0 2px; background: linear-gradient(#555b69, #555b69) no-repeat center / 100% 1px; }
.views input::-webkit-slider-thumb { appearance: none; width: 12px; height: 12px; border-radius: 6px; border: 1px solid #444; background: #f6f0ea; }

.ime { position: absolute; right: 3px; top: 738px; width: 150px; height: 26px; background: #fff; border: 1px solid #a9c6e8; display: flex; align-items: center; justify-content: space-between; padding: 0 2px 0 32px; color: #1268c0; }
.ime b { font-size: 15px; }
.sogou { position: absolute; left: -5px; top: -5px; width: 32px; height: 32px; }
.meter { position: absolute; right: 0; top: 854px; width: 10px; height: 59px; border-radius: 4px 0 0 4px; border: solid #4a4b58; border-width: 6px 2px 6px 4px; background: repeating-linear-gradient(transparent 0 2px, #4a4b58 2px 3px), linear-gradient(#343d78 0 25%, #d8d850 30%, #7ccb6a 70%, #3cc8c0); }
.wm { position: absolute; right: 10px; bottom: 6px; display: flex; align-items: center; opacity: .85; }
.wm svg { width: 44px; height: 42px; }
.wm strong { display: block; font-size: 21px; line-height: 26px; color: #6ea9dd; }
.wm b { display: block; font: 700 16px/18px "Liberation Sans", sans-serif; color: #6dc486; }
```
